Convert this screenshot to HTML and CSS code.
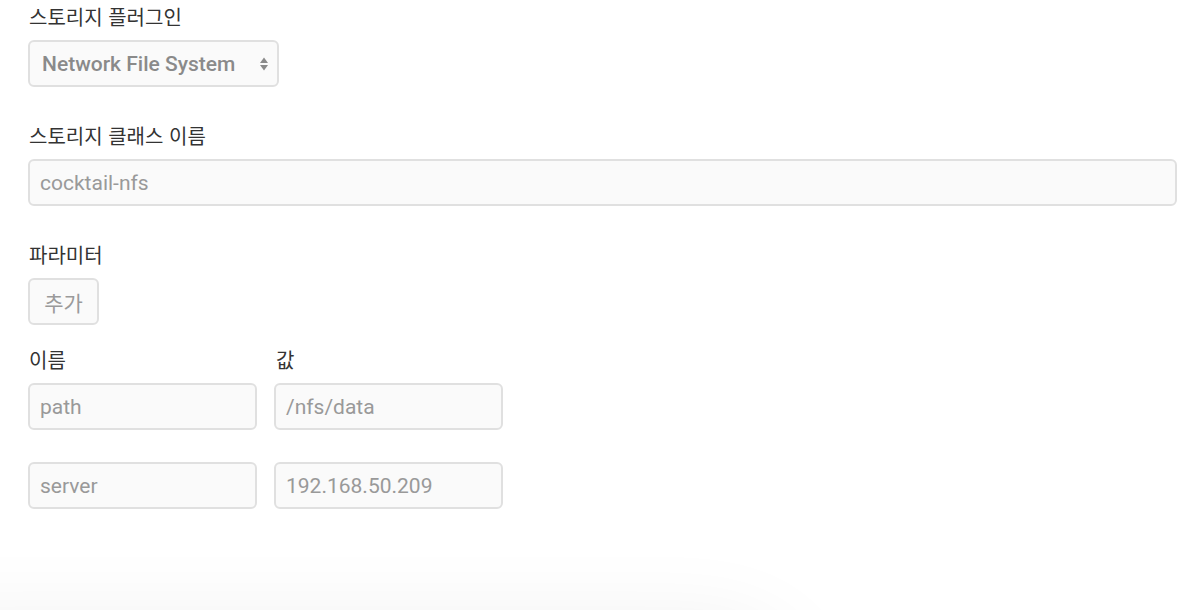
FILE: index.html
```html
<!DOCTYPE html>
<html lang="ko">
<head>
<meta charset="utf-8">
<title>스토리지 클래스</title>
<link rel="stylesheet" href="styles.css">
</head>
<body>
<main class="form">
  <section class="field">
    <label class="label">스토리지 플러그인</label>
    <div class="select">
      <span class="select-text">Network File System</span>
      <svg class="select-arrows" width="10" height="16" viewBox="0 0 10 16">
        <path d="M5 1.5 L9 7 L1 7 Z" fill="#8a8a8a"/>
        <path d="M5 14.5 L9 9 L1 9 Z" fill="#8a8a8a"/>
      </svg>
    </div>
  </section>

  <section class="field">
    <label class="label">스토리지 클래스 이름</label>
    <div class="input input-wide">cocktail-nfs</div>
  </section>

  <section class="field field-tight">
    <label class="label">파라미터</label>
    <button class="btn">추가</button>
  </section>

  <section class="params">
    <div class="param-head">
      <span class="label col">이름</span>
      <span class="label col">값</span>
    </div>
    <div class="param-row">
      <div class="input col">path</div>
      <div class="input col">/nfs/data</div>
    </div>
    <div class="param-row">
      <div class="input col">server</div>
      <div class="input col">192.168.50.209</div>
    </div>
  </section>
</main>
<div class="footer-shadow"></div>
</body>
</html>
```
FILE: styles.css
```css
html, body {
  margin: 0;
  padding: 0;
  background: #ffffff;
  overflow: hidden;
  height: 100%;
}

body {
  font-family: Roboto, "Noto Sans CJK KR", sans-serif;
  color: #333333;
}

.form {
  padding: 5px 25px 0 28px;
}

.field {
  margin-bottom: 37px;
}

.field-tight {
  margin-bottom: 23px;
}

.label {
  display: block;
  height: 24px;
  line-height: 24px;
  font-family: "Noto Sans CJK KR", sans-serif;
  font-size: 20px;
  color: #333333;
  margin-bottom: 11px;
  padding-left: 1px;
}

.select,
.input,
.btn {
  box-sizing: border-box;
  height: 47px;
  border: 2px solid #e0e0e0;
  border-radius: 6px;
  background: #fafafa;
  font-family: Roboto, "Noto Sans CJK KR", sans-serif;
  font-size: 21px;
  color: #999999;
  display: flex;
  align-items: center;
}

.select {
  width: 251px;
  padding: 0 8px 0 12px;
  justify-content: space-between;
  color: #8a8a8a;
  font-weight: 500;
}

.select-arrows {
  display: block;
}

.input {
  padding: 0 10px;
}

.input-wide {
  width: 100%;
}

.btn {
  width: 71px;
  justify-content: center;
  font-family: "Noto Sans CJK KR", sans-serif;
  font-size: 21px;
  color: #9a9a9a;
  padding: 0;
}

.param-head {
  display: flex;
  gap: 17px;
}

.param-head .label {
  margin-bottom: 11px;
}

.param-row {
  display: flex;
  gap: 17px;
  margin-bottom: 32px;
}

.col {
  width: 229px;
}

.footer-shadow {
  position: fixed;
  left: -120px;
  width: 900px;
  top: 640px;
  height: 200px;
  border-radius: 60px;
  background: #f2f2f2;
  box-shadow: 0 0 90px 14px rgba(0, 0, 0, 0.07);
}
```
